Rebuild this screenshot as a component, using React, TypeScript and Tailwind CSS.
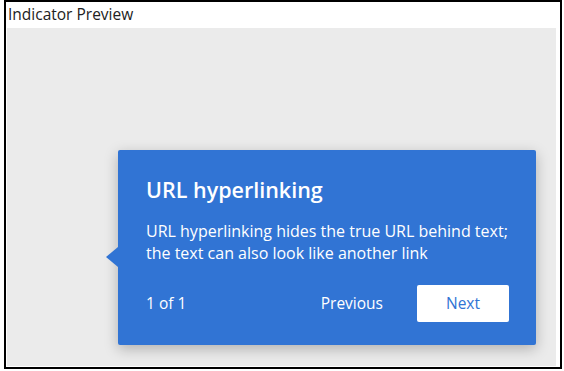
import React from 'react';

export default function App() {
  const font = { fontFamily: '"Segoe UI", "Open Sans", "Noto Sans", sans-serif' };
  return (
    <div className="w-[564px] h-[371px] bg-white" style={font}>
      <div className="ml-[4px] w-[558px] h-[369px] border-2 border-black flex flex-col bg-white">
        {/* Header */}
        <div className="h-[26px] flex items-center pl-[2px] text-[15.5px] text-[#222] leading-none">
          Indicator Preview
        </div>

        {/* Preview canvas */}
        <div className="flex-1 ml-[1px] mr-[4px] mb-[1px] bg-[#ebebeb] overflow-hidden">
          <div className="relative ml-[111px] mt-[122px] w-[418px] h-[195px] bg-[#3174d4] rounded-[2px] shadow-[0_4px_14px_rgba(0,0,0,0.25)] text-white pl-[28px] pr-[27px] pt-[26px] flex flex-col">
            {/* Beak */}
            <div className="absolute left-[-12px] top-[97px] w-0 h-0 border-y-[10px] border-y-transparent border-r-[12px] border-r-[#3174d4]" />

            <h2 className="text-[21.5px] font-semibold leading-[28px]">URL hyperlinking</h2>
            <p className="mt-[16px] text-[16px] leading-[22px]">
              URL hyperlinking hides the true URL behind text;
              <br />
              the text can also look like another link
            </p>

            <div className="mt-[21px] flex items-center">
              <span className="text-[15.5px] flex-1">1 of 1</span>
              <button className="text-[15.5px] mr-[34px]">Previous</button>
              <button className="w-[92px] h-[37px] bg-white text-[#3174d4] text-[15.5px] rounded-[2px]">
                Next
              </button>
            </div>
          </div>
        </div>
      </div>
    </div>
  );
}
